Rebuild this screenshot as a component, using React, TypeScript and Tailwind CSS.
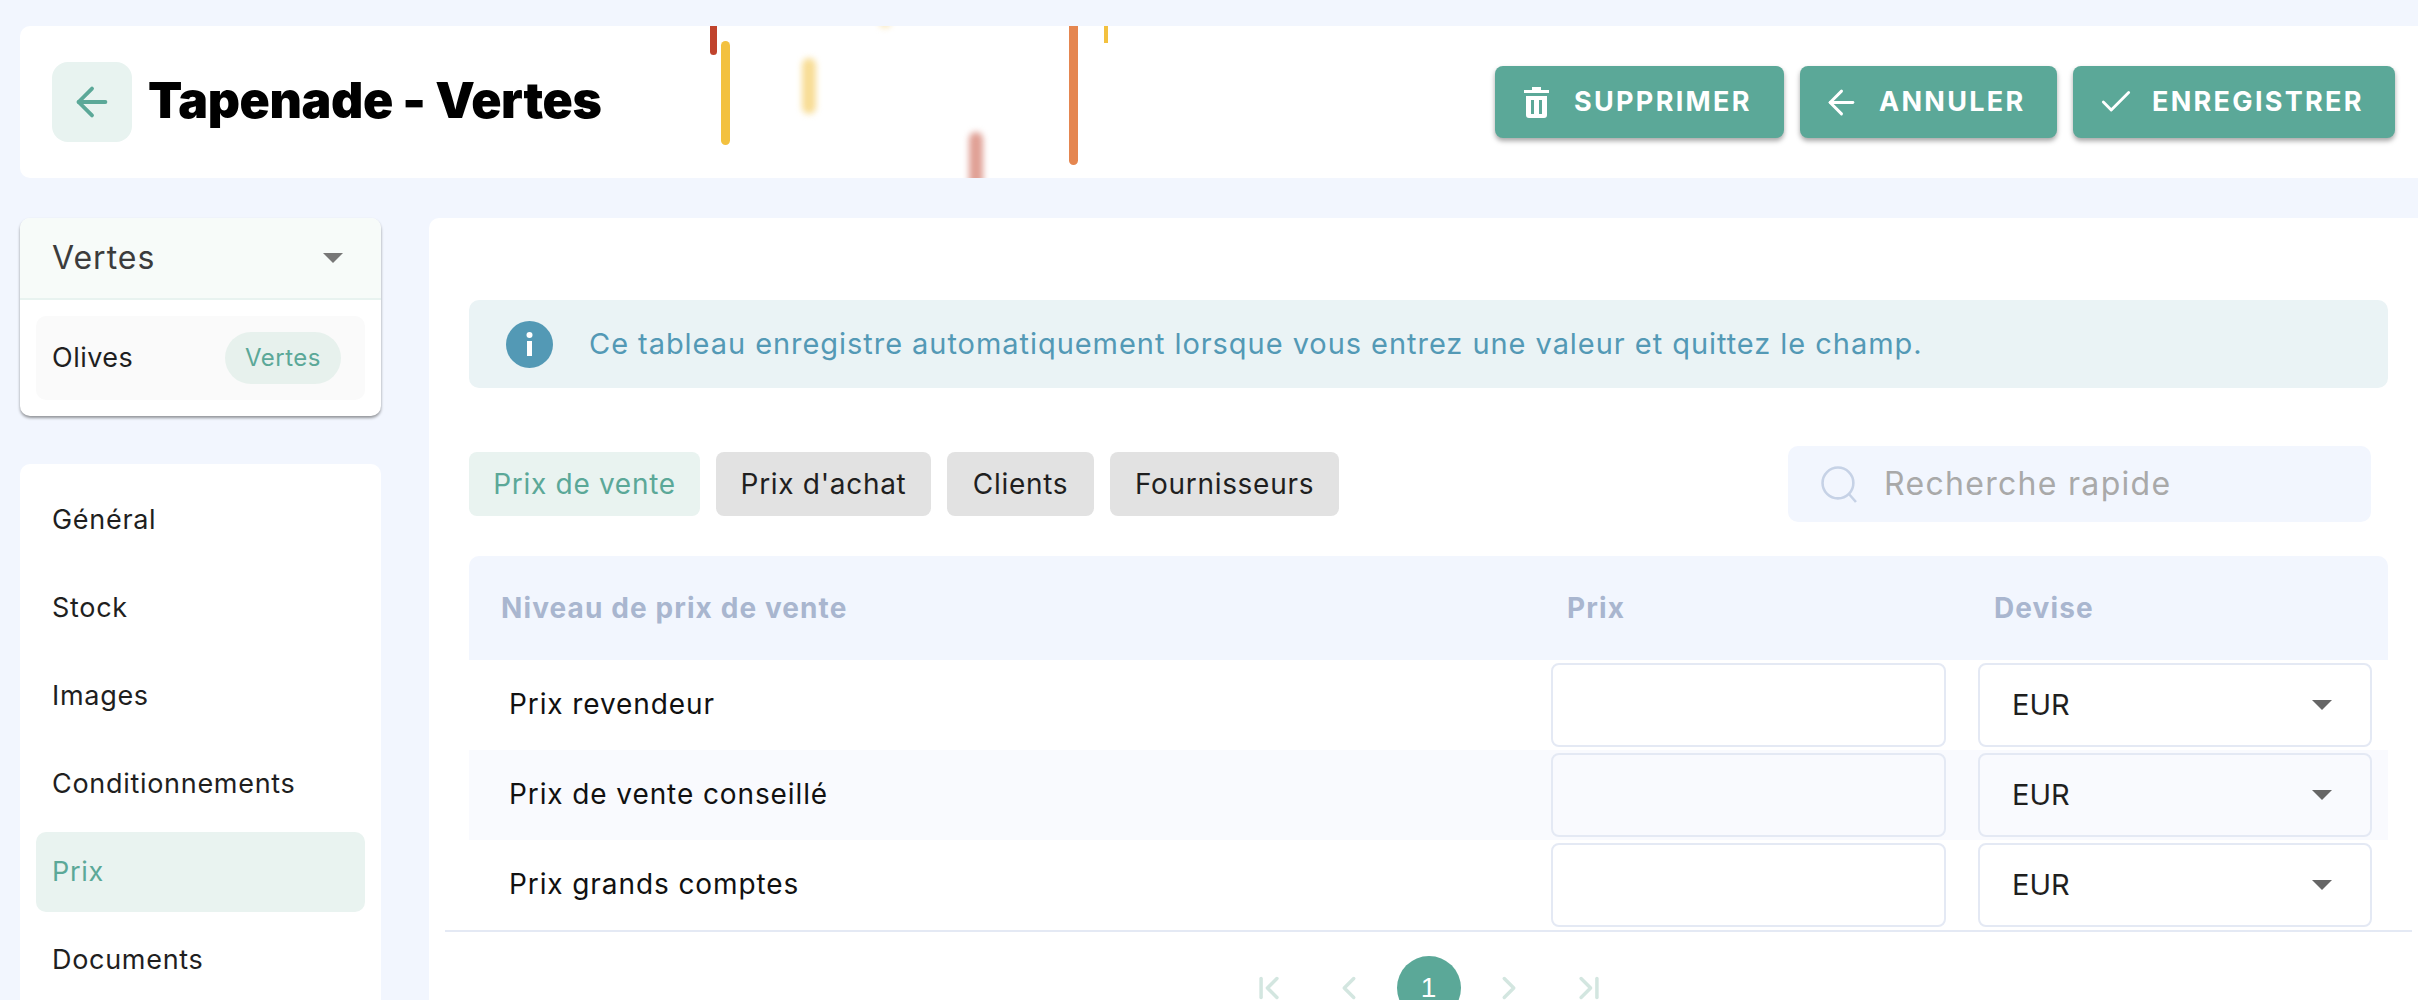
import { ArrowLeft, Check, ChevronFirst, ChevronLast, ChevronLeft, ChevronRight } from 'lucide-react';

const SANS = 'font-["Inter","Noto_Sans",sans-serif]';

const NAV = ['Général', 'Stock', 'Images', 'Conditionnements', 'Prix', 'Documents'];
const ROWS = ['Prix revendeur', 'Prix de vente conseillé', 'Prix grands comptes'];

function Caret({ className }: { className: string }) {
  return (
    <svg viewBox="0 0 20 10" className={className} fill="currentColor">
      <path d="M0 0h20L10 10z" />
    </svg>
  );
}

function TrashIcon() {
  return (
    <svg viewBox="0 0 25 31" className="-mr-[3px] ml-[1px] h-[31px] w-[25px]" fill="white">
      <path d="M8 0h9v3h8v3H0V3h8z" />
      <path fillRule="evenodd" d="M2 9h21v19a3 3 0 0 1-3 3H5a3 3 0 0 1-3-3zM7 13v14h3V13zM15 13v14h3V13z" />
    </svg>
  );
}

function InfoIcon() {
  return (
    <svg viewBox="0 0 47 47" className="h-[47px] w-[47px] shrink-0">
      <circle cx="23.5" cy="23.5" r="23.5" fill="#5399b5" />
      <circle cx="23.5" cy="14" r="3" fill="white" />
      <rect x="21" y="20" width="5" height="15" fill="white" />
    </svg>
  );
}

function SearchIcon() {
  return (
    <svg viewBox="0 0 36 36" className="h-[37px] w-[37px] shrink-0" fill="none" stroke="#c6d2e6" strokeWidth="2.5">
      <circle cx="16.5" cy="16.5" r="15" />
      <path d="M27 27l7 8" />
    </svg>
  );
}

function ActionButton({ icon, label, width }: { icon: React.ReactNode; label: string; width: string }) {
  return (
    <button className={`flex h-[72px] ${width} items-center rounded-[8px] bg-[#5ba898] pl-[28px] text-[27px] font-bold tracking-[2.3px] text-white shadow-[0_3px_5px_rgba(0,0,0,0.35)]`}>
      <span className="flex w-[51px] items-center">{icon}</span>
      <span>{label}</span>
    </button>
  );
}

export default function App() {
  return (
    <div className={`h-[1000px] overflow-hidden bg-[#f2f6fe] pt-[26px] text-[#1f1f1f] ${SANS}`}>
      <header className="relative ml-[20px] flex h-[152px] items-center justify-between overflow-hidden rounded-l-[10px] bg-white pl-[32px] pr-[23px]">
        <div className="absolute left-[690px] top-0 h-[29px] w-[7px] rounded-b-full bg-[#c0432c]" />
        <div className="absolute left-[701px] top-[15px] h-[104px] w-[9px] rounded-full bg-[#f3c13f]" />
        <div className="absolute left-[782px] top-[32px] h-[56px] w-[14px] rounded-full bg-[#f8dd96] blur-[3px]" />
        <div className="absolute left-[859px] top-[-22px] h-[24px] w-[12px] rounded-full bg-[#f8e6b8] blur-[3px]" />
        <div className="absolute left-[949px] top-[106px] h-[70px] w-[14px] rounded-full bg-[#e0a095] blur-[3px]" />
        <div className="absolute left-[1049px] top-0 h-[139px] w-[9px] rounded-b-full bg-[#e58650]" />
        <div className="absolute left-[1084px] top-0 h-[17px] w-[4px] bg-[#f3c13f]" />
        <div className="relative flex items-center gap-[16px]">
          <button className="flex h-[80px] w-[80px] items-center justify-center rounded-[16px] bg-[#e8f3f0] text-[#5ba898]">
            <ArrowLeft size={46} strokeWidth={2} />
          </button>
          <h1 className="-mt-[4px] text-[50px] font-black tracking-[-0.4px] text-black">Tapenade - Vertes</h1>
        </div>
        <div className="relative flex gap-[16px]">
          <ActionButton icon={<TrashIcon />} label="SUPPRIMER" width="w-[289px]" />
          <ActionButton icon={<ArrowLeft size={39} strokeWidth={1.8} className="-ml-[6px]" />} label="ANNULER" width="w-[257px]" />
          <ActionButton icon={<Check size={38} strokeWidth={1.8} className="-ml-[4px]" />} label="ENREGISTRER" width="w-[322px]" />
        </div>
      </header>

      <div className="mt-[40px] flex gap-[48px] pl-[20px]">
        <aside className="w-[361px] shrink-0">
          <div className="overflow-hidden rounded-[10px] bg-white shadow-[0_2px_3px_rgba(0,0,0,0.4)]">
            <div className="flex h-[82px] items-center justify-between border-b-2 border-[#e8f3f0] bg-[#f7fbf9] pl-[32px] pr-[38px] text-[32px] tracking-[1px] text-[#3c3c3c]">
              Vertes
              <Caret className="h-[10px] w-[20px] text-[#777]" />
            </div>
            <div className="p-[16px]">
              <div className="flex h-[84px] items-center justify-between rounded-[10px] bg-[#fafafa] pl-[16px] pr-[24px] text-[27px] tracking-[0.5px]">
                Olives
                <span className="flex h-[52px] w-[116px] items-center justify-center rounded-full bg-[#e7f1ed] text-[24px] tracking-[0.5px] text-[#5ba898]">Vertes</span>
              </div>
            </div>
          </div>
          <nav className="mt-[48px] flex flex-col gap-[8px] rounded-[10px] bg-white p-[16px]">
            {NAV.map((item) => (
              <a key={item} className={`flex h-[80px] items-center rounded-[10px] px-[16px] text-[27px] tracking-[0.7px] ${item === 'Prix' ? 'bg-[#e9f3f0] text-[#5ba898]' : ''}`}>
                {item}
              </a>
            ))}
          </nav>
        </aside>

        <main className="h-[800px] flex-1 rounded-tl-[10px] bg-white pl-[40px] pr-[30px] pt-[82px]">
          <div className="flex h-[88px] items-center gap-[36px] rounded-[10px] bg-[#eaf3f5] pl-[37px] text-[#5399b5]">
            <InfoIcon />
            <span className="text-[29px] tracking-[0.95px]">Ce tableau enregistre automatiquement lorsque vous entrez une valeur et quittez le champ.</span>
          </div>

          <div className="mt-[58px] flex items-center justify-between pr-[17px]">
            <div className="flex gap-[16px] text-[28px] tracking-[0.7px]">
              <button className="flex h-[64px] w-[231px] items-center justify-center rounded-[8px] bg-[#e9f3f0] text-[#5ba898]">Prix de vente</button>
              <button className="flex h-[64px] w-[215px] items-center justify-center rounded-[8px] bg-[#e2e2e2]">Prix d'achat</button>
              <button className="flex h-[64px] w-[147px] items-center justify-center rounded-[8px] bg-[#e2e2e2]">Clients</button>
              <button className="flex h-[64px] w-[229px] items-center justify-center rounded-[8px] bg-[#e2e2e2]">Fournisseurs</button>
            </div>
            <div className="flex h-[76px] w-[583px] items-center gap-[26px] rounded-[10px] bg-[#f2f6fe] pl-[33px] text-[32px] tracking-[1.3px] text-[#a9a9a9]">
              <SearchIcon />
              Recherche rapide
            </div>
          </div>

          <div className="mt-[34px] flex h-[104px] items-center rounded-t-[10px] bg-[#f2f6fe] text-[28px] font-bold tracking-[1.1px] text-[#a9b6cf]">
            <span className="w-[1098px] pl-[32px]">Niveau de prix de vente</span>
            <span className="w-[427px]">Prix</span>
            <span>Devise</span>
          </div>

          {ROWS.map((row, i) => (
            <div key={row} className={`flex h-[90px] items-center ${i === 1 ? 'bg-[#f9fafe]' : ''}`}>
              <span className="-mt-[2px] w-[1082px] pl-[40px] text-[28px] tracking-[0.9px] text-[#111]">{row}</span>
              <div className="h-[84px] w-[395px] rounded-[8px] border-2 border-[#e4e9f4]" />
              <div className="ml-[32px] flex h-[84px] w-[394px] items-center justify-between rounded-[8px] border-2 border-[#e4e9f4] pl-[32px] pr-[38px] text-[29px]">
                EUR
                <Caret className="h-[10px] w-[20px] text-[#666]" />
              </div>
            </div>
          ))}

          <div className="-ml-[24px] -mr-[24px] border-t-2 border-[#e4e9f4]">
            <div className="mt-[24px] flex items-center justify-center text-[#d3e6e0]">
              <span className="flex w-[80px] justify-center"><ChevronFirst size={38} strokeWidth={2.2} /></span>
              <span className="flex w-[80px] justify-center"><ChevronLeft size={38} strokeWidth={2.2} /></span>
              <span className="mx-[8px] flex h-[64px] w-[64px] items-center justify-center rounded-full bg-[#5ba898] font-['Liberation_Sans',sans-serif] text-[28px] text-white">1</span>
              <span className="flex w-[80px] justify-center"><ChevronRight size={38} strokeWidth={2.2} /></span>
              <span className="flex w-[80px] justify-center"><ChevronLast size={38} strokeWidth={2.2} /></span>
            </div>
          </div>
        </main>
      </div>
    </div>
  );
}
